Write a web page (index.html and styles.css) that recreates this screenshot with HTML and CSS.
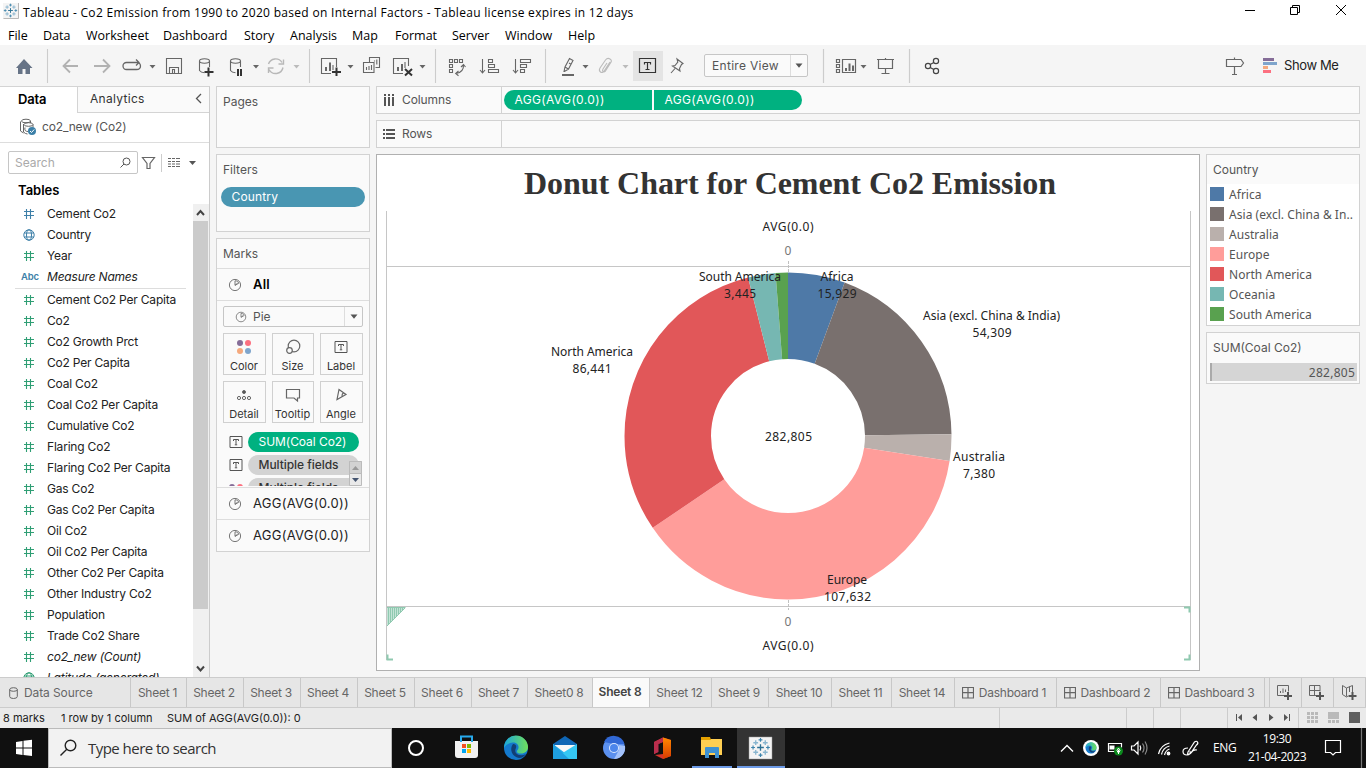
FILE: index.html
```html
<!DOCTYPE html>
<html lang="en">
<head>
<meta charset="utf-8">
<title>Tableau - Co2 Emission from 1990 to 2020</title>
<link rel="stylesheet" href="styles.css">
</head>
<body>
<svg class="defs" width="0" height="0" aria-hidden="true">
  <symbol id="hash" viewBox="0 0 12 12"><path d="M3.500 1v10M7.500 1v10M1 3.500h10M1 7.500h10" fill="none" stroke="currentColor" stroke-width="1.100"/></symbol>
  <symbol id="globe" viewBox="0 0 12 12"><g fill="none" stroke="currentColor"><circle cx="6" cy="6" r="5.200"/><ellipse cx="6" cy="6" rx="2.500" ry="5.200"/><path d="M1.200 4h9.600M1.200 8h9.600"/></g></symbol>
  <symbol id="pie" viewBox="0 0 14 14"><g fill="none" stroke="currentColor"><circle cx="7" cy="7" r="5.600"/><path d="M7 2.800v4.600l3.800-2.200M7 2.800c2 0 3.200.9 3.800 2.400M7 7.200l2.600-2"/></g></symbol>
  <symbol id="tbox" viewBox="0 0 14 14"><path d="M1 1.500h12v11H1zM4.500 6V4.500h5V6M7 4.500v5M5.800 9.800h2.400" fill="none" stroke="currentColor"/></symbol>
  <symbol id="dash" viewBox="0 0 12 12"><path d="M.500.500h11v10.500H.500zM6 .500V11M.500 5.700h11" fill="none" stroke="currentColor" stroke-width="1.200"/></symbol>
  <symbol id="down" viewBox="0 0 8 5"><path d="M.500.500h7L4 4.800z" fill="currentColor"/></symbol>
  <symbol id="tableau" viewBox="0 0 22 22"><g fill="none"><path d="M11 7.500v7M7.500 11h7" stroke="#2d7194" stroke-width="1.400"/><path d="M11 1v4M9 3h4M11 17v4M9 19h4M1.200 11h4M3.200 9v4M16.800 11h4M18.800 9v4" stroke="#3d84ac" stroke-width="1.200"/><path d="M6 3.500v5M3.500 6h5M16 3.500v5M13.500 6h5M6 13.500v5M3.500 16h5M16 13.500v5M13.500 16h5" stroke="#88b5cf" stroke-width="1.400"/></g></symbol>
</svg>

<header class="titlebar">
  <svg class="app-icon" width="16" height="16" viewBox="0 0 16 16"><path d="M0 0h16v16H0z" fill="#f4f4f4"/><path d="M.500 15.500h15V0" fill="none" stroke="#b8b8b8"/><use href="#tableau" x="0" y="0" width="15" height="15"/></svg>
  <span class="title-text">Tableau - Co2 Emission from 1990 to 2020 based on Internal Factors - Tableau license expires in 12 days</span>
  <svg class="win-buttons" width="126" height="23" viewBox="1240 0 126 23" fill="none" stroke="#000"><path d="M1245 10.500h10M1290.500 7.500h7v7h-7zM1292.500 7.500v-2h7v7h-2M1336 5l10 10M1346 5l-10 10"/></svg>
</header>
<nav class="menubar">
  <span class="w35">File</span><span class="w43">Data</span><span class="w77">Worksheet</span><span class="w81">Dashboard</span><span class="w46">Story</span><span class="w62">Analysis</span><span class="w43">Map</span><span class="w57">Format</span><span class="w53">Server</span><span class="w63">Window</span><span>Help</span>
</nav>

<div class="toolbar">
  <svg width="704" height="41" viewBox="0 45 704 41" fill="none" stroke="#666" stroke-width="1.100">
    <path d="M16 68l8-9 8.500 9h-2.500v6h-4.500v-5h-3v5H18v-6z" fill="#667386" stroke="none"/>
    <path d="M47.500 49v34M309.500 49v34M435.500 49v34M545.500 49v34" stroke="#ccc"/>
    <g stroke="#b2b2b2" stroke-width="1.800"><path d="M78 66H63.500M70 59.500L63.500 66l6.500 6.500M94 66h15M103 59.500l6.500 6.500-6.500 6.500"/></g>
    <path d="M131 62.500h-4.500a3.500 3.500 0 0 0 0 7h10q4 0 4-3.500 0-2-1.500-3M130 62.500h8.500M136 59.500l3 3-3 3" stroke-width="1.300"/>
    <path d="M166.500 58.500h15v15h-15zM169.500 73v-5.500h9V73M172.500 73v-3.500h2V73"/>
    <ellipse cx="204.500" cy="61" rx="5" ry="2.200"/><path d="M199.500 61v9.500q1.500 2 5 2.200M209.500 61v6"/>
    <path d="M208.500 67.500v9M204.500 72h9" stroke="#333" stroke-width="2"/>
    <ellipse cx="235.500" cy="61" rx="5" ry="2.200"/><path d="M230.500 61v9.500q1.500 2 5 2.200M240.500 61v6"/>
    <path d="M238 69v7M241 69v7" stroke="#333" stroke-width="2"/>
    <g stroke="#b8b8b8" stroke-width="1.400"><path d="M268.500 64a7.500 7.500 0 0 1 13.500-1.500M283 67.500a7.500 7.500 0 0 1-14 2M278.500 64h5v-4.500M273.500 68h-5v5"/></g>
    <g fill="#666" stroke="none"><path d="M149.500 65h6l-3 3.500zM253 65h6l-3 3.500zM347.500 65h6l-3 3.500zM419.500 65h6l-3 3.500zM582.500 65h6l-3 3.500z"/><path d="M293.500 65h6l-3 3.500zM622.500 65h6l-3 3.500z" fill="#bbb"/></g>
    <path d="M331 73.500h-9.500v-15h15V67M333 70v-5"/><path d="M326 71v-4M330 71v-8.500" stroke-width="2"/><path d="M336.500 67.500v8.500M332 72h9" stroke="#333" stroke-width="2"/>
    <path d="M369.500 62v-4.500h10v10h-4M363.500 62.500h10.500v10h-10.500zM366.500 70v-3M369 70v-4M371.500 70v-5M374.500 61.500v-1M376.800 64.500v-5"/>
    <path d="M403 73.500h-9.500v-15h15V66M405 68v-6"/><path d="M398 71v-4M402 71v-7" stroke-width="2"/><path d="M405 69l7 6.500M412 69l-7 6.500" stroke="#333" stroke-width="2"/>
    <path d="M449.500 59.500h3v3h-3zM454.500 59.500h3v3h-3zM459.500 59.500h3v3h-3zM449.500 64.500h3v3h-3zM449.500 69.500h3v3h-3zM463.500 65q.5 7-7.500 8.500M461 67l2.500-2.500 2 2.500M458.500 71l-2.800 2.500 2.800 2.200"/>
    <path d="M482.500 59v13.500M480 70l2.500 3 2.500-3M488.500 59.500h4v3h-4zM488.500 64.500h6v3h-6zM488.500 69.500h10v3h-10zM515.500 59v13.500M513 70l2.500 3 2.500-3M520.500 59.500h10v3h-10zM520.500 64.500h6v3h-6zM520.500 69.500h4v3h-4z"/>
    <path d="M562 75h12" stroke-width="2"/><path d="M564 71.500l1-4.500 4.500-8.500 3.500 2-4.500 8.500-4 2.500zM565 67l3.300 2M569 63l2 1.200"/>
    <path d="M610 62l-5.500 8.500q-2 3-4 1.500t-.5-4l5.500-8q2-2.500 4.500-1t.5 4l-5 8q-1.500 1.500-2.500.5t0-2.500l4-6" stroke="#bbb"/>
    <path d="M633 51h30v30h-30z" fill="#e4e4e4" stroke="none"/><path d="M639.500 58.500h16v14h-16zM644.500 64.500v-2h6v2M647.500 62.500v7M645.500 69.500h4" stroke="#333" stroke-width="1.200"/>
    <path d="M677 59l6 4.500-1.500 1-2 4 .5 2.500-7.500-5 2.500-.5 2.800-3.500zM675 68.500l-4 4.500"/>
  </svg>
  <div class="view-select"><span>Entire View</span><i><svg width="8" height="5"><use href="#down"/></svg></i></div>
  <svg class="tools-right" width="446" height="41" viewBox="808 45 446 41" fill="none" stroke="#666" stroke-width="1.200">
    <path d="M823.500 49v34M909.500 49v34" stroke="#ccc"/>
    <path d="M836.500 59.500h3v3h-3zM836.500 64.500h3v3h-3zM836.500 69.500h3v3h-3zM842.500 59.500h13v13h-13z"/><path d="M846 71v-3M849.500 71v-7.500M853 71v-5.500" stroke-width="2"/>
    <path d="M860.500 65h6l-3 3.500z" fill="#666" stroke="none"/>
    <path d="M877 59.500h17M878.500 59.500v9h14v-9M885.500 58v1M885.500 68.500v5M881.500 73.500h8"/>
    <g stroke="#444"><circle cx="928" cy="66" r="2.600"/><circle cx="936" cy="61" r="2.600"/><circle cx="936" cy="71" r="2.600"/><path d="M930.200 64.600l3.600-2.200M930.200 67.400l3.600 2.200"/></g>
    <path d="M1226.500 59.500h14.500l2.500 3.500-2.500 3.500h-14.500zM1234.500 57.500v2M1234.500 66.500v8M1232 74.500h5"/>
  </svg>
  <svg class="show-icon" width="15" height="16" viewBox="0 0 15 16"><path d="M0 0h11v3H0z" fill="#856d98"/><path d="M0 4h14v3H0z" fill="#7fa5cc"/><path d="M0 8h5v3H0z" fill="#f5a97d"/><path d="M0 12h8v3H0z" fill="#fc7080"/></svg>
  <span class="show-text">Show Me</span>
</div>

<main class="workspace">
  <aside class="data-pane">
    <div class="pane-tabs"><b>Data</b><div><span>Analytics</span><svg width="8" height="11" viewBox="0 0 8 11"><path d="M6 1L1.500 5.500 6 10" fill="none" stroke="#555" stroke-width="1.300"/></svg></div></div>
    <div class="source">
      <svg width="18" height="18" viewBox="0 0 18 18" fill="none" stroke="#666"><ellipse cx="7" cy="3" rx="4.500" ry="1.800"/><path d="M1.500 3.500v9.500l3 2M11.500 3v2M4.500 6v8q2 2 4 2"/><ellipse cx="9.500" cy="6.500" rx="4.500" ry="1.800"/><path d="M14 6.500v3M6 9.500q-1 4 3 4"/><circle cx="13" cy="13" r="4" fill="#3c80a8" stroke="none"/><path d="M11 13l1.500 1.500 2.700-3" stroke="#fff"/></svg>
      <span>co2_new (Co2)</span>
    </div>
    <div class="search-row">
      <div class="search"><span>Search</span><svg width="11" height="11" viewBox="0 0 11 11" fill="none" stroke="#555"><circle cx="6.500" cy="4.500" r="3.500"/><path d="M4 7L.500 10.500"/></svg></div>
      <svg width="64" height="20" viewBox="138 152 64 20" fill="none" stroke="#666"><path d="M142.500 156.500h12l-4.500 6v5h-3v-5z" stroke-width="1.200"/><path d="M161.500 153v18" stroke="#ccc"/><path d="M168 157.500h3M172 157.500h3M176 157.500h4M168 160.500h3M172 160.500h3M176 160.500h4M168 163h3M172 163h3M176 163h4M168 165.500h3M172 165.500h3M176 165.500h4" stroke-width="1.200"/><path d="M189 160h7l-3.500 4z" fill="#555" stroke="none"/></svg>
    </div>
    <h2>Tables</h2>
    <div class="field-area">
      <div class="fields">
        <p class="dim"><svg><use href="#hash"/></svg>Cement Co2</p>
        <p class="dim"><svg><use href="#globe"/></svg>Country</p>
        <p><svg><use href="#hash"/></svg>Year</p>
        <p class="dim"><small>Abc</small><em>Measure Names</em></p>
        <hr>
        <p><svg><use href="#hash"/></svg>Cement Co2 Per Capita</p>
        <p><svg><use href="#hash"/></svg>Co2</p>
        <p><svg><use href="#hash"/></svg>Co2 Growth Prct</p>
        <p><svg><use href="#hash"/></svg>Co2 Per Capita</p>
        <p><svg><use href="#hash"/></svg>Coal Co2</p>
        <p><svg><use href="#hash"/></svg>Coal Co2 Per Capita</p>
        <p><svg><use href="#hash"/></svg>Cumulative Co2</p>
        <p><svg><use href="#hash"/></svg>Flaring Co2</p>
        <p><svg><use href="#hash"/></svg>Flaring Co2 Per Capita</p>
        <p><svg><use href="#hash"/></svg>Gas Co2</p>
        <p><svg><use href="#hash"/></svg>Gas Co2 Per Capita</p>
        <p><svg><use href="#hash"/></svg>Oil Co2</p>
        <p><svg><use href="#hash"/></svg>Oil Co2 Per Capita</p>
        <p><svg><use href="#hash"/></svg>Other Co2 Per Capita</p>
        <p><svg><use href="#hash"/></svg>Other Industry Co2</p>
        <p><svg><use href="#hash"/></svg>Population</p>
        <p><svg><use href="#hash"/></svg>Trade Co2 Share</p>
        <p><svg><use href="#hash"/></svg><em>co2_new (Count)</em></p>
        <p><svg><use href="#globe"/></svg><em>Latitude (generated)</em></p>
      </div>
      <div class="scroll">
        <svg width="15" height="17" viewBox="0 0 15 17"><path d="M4 11l3.500-4 3.500 4" fill="none" stroke="#444" stroke-width="2"/></svg>
        <div class="thumb"></div>
        <svg width="15" height="17" viewBox="0 0 15 17"><path d="M4 6.500l3.500 4 3.500-4" fill="none" stroke="#444" stroke-width="2"/></svg>
      </div>
    </div>
  </aside>

  <section class="cards">
    <div class="card pages"><h3>Pages</h3></div>
    <div class="card filters"><h3>Filters</h3><div class="pill blue">Country</div></div>
    <div class="card marks">
      <h3>Marks</h3>
      <div class="mark-row all"><svg width="14" height="14"><use href="#pie"/></svg><b>All</b></div>
      <div class="mark-body">
        <div class="mark-type"><svg width="12" height="12"><use href="#pie"/></svg><span>Pie</span><i><svg width="8" height="5"><use href="#down"/></svg></i></div>
        <div class="mark-grid">
          <div><svg viewBox="0 0 20 20"><circle cx="6" cy="6" r="3" fill="#856d98"/><circle cx="14" cy="6" r="3" fill="#fc7080"/><circle cx="6" cy="14" r="3" fill="#f5a97d"/><circle cx="14" cy="14" r="3" fill="#7fa5cc"/></svg>Color</div>
          <div><svg viewBox="0 0 20 20" fill="none" stroke="#666" stroke-width="1.200"><circle cx="11" cy="9" r="5.800"/><circle cx="6.500" cy="13.500" r="2.800" fill="#fafafa"/></svg>Size</div>
          <div><svg viewBox="0 0 20 20" color="#555"><use href="#tbox" x="3" y="3" width="14" height="14"/></svg>Label</div>
          <div><svg viewBox="0 0 20 20" fill="none" stroke="#666"><circle cx="10" cy="7" r="1.500" fill="#555"/><circle cx="5" cy="13" r="1.600"/><circle cx="10" cy="13" r="1.600"/><circle cx="15" cy="13" r="1.600"/></svg>Detail</div>
          <div><svg viewBox="0 0 20 20" fill="none" stroke="#666" stroke-width="1.200"><path d="M3.500 4.500h13v8.500h-2v3l-3.500-3H3.500z"/></svg>Tooltip</div>
          <div><svg viewBox="0 0 20 20" fill="none" stroke="#666" stroke-width="1.200"><path d="M8 4.500l7 5-9 5zM12.500 7.500q-2 2-1.500 4"/></svg>Angle</div>
        </div>
        <div class="mark-pills">
          <div><svg width="14" height="14"><use href="#tbox"/></svg><span class="pill green">SUM(Coal Co2)</span></div>
          <div><svg width="14" height="14"><use href="#tbox"/></svg><span class="pill grey">Multiple fields</span></div>
          <div><svg width="14" height="14" viewBox="0 0 14 14"><circle cx="3" cy="6" r="3" fill="#856d98"/><circle cx="11" cy="6" r="3" fill="#fc7080"/></svg><span class="pill grey">Multiple fields</span></div>
          <svg class="mini-scroll" width="13" height="25" viewBox="0 0 13 25"><path d="M.500.500h12v12H.500zM.500 12.500h12v12H.500z" fill="#e9e9e9" stroke="#bbb"/><path d="M.500.500h12v12H.500z" fill="#d2d2d2" stroke="#bbb"/><path d="M3 9l3.500-4L10 9z" fill="#999"/><path d="M3 17l3.500 4 3.500-4z" fill="#44546f"/></svg>
        </div>
      </div>
      <div class="mark-row"><svg width="14" height="14"><use href="#pie"/></svg><span>AGG(AVG(0.0))</span></div>
      <div class="mark-row last"><svg width="14" height="14"><use href="#pie"/></svg><span>AGG(AVG(0.0))</span></div>
    </div>
  </section>

  <section class="sheet">
    <div class="shelf"><div class="shelf-name"><svg width="12" height="12" viewBox="0 0 12 12"><path d="M2 0v2M6 0v2M10 0v2M2 3v9M6 3v9M10 3v9" stroke="#555" stroke-width="2"/></svg><span>Columns</span></div><div class="pill green col first">AGG(AVG(0.0))</div><div class="pill green col second">AGG(AVG(0.0))</div></div>
    <div class="shelf"><div class="shelf-name"><svg width="12" height="12" viewBox="0 0 12 12"><path d="M0 2h2M0 6h2M0 10h2M3 2h9M3 6h9M3 10h9" stroke="#555" stroke-width="2"/></svg><span>Rows</span></div></div>
    <div class="view-row">
      <div class="view">
        <svg width="822" height="515" viewBox="377 155 822 515">
          <text class="viz-title" x="790" y="194" text-anchor="middle" textLength="532">Donut Chart for Cement Co2 Emission</text>
          <path d="M386.500 211v449M1190.500 211v449M386 266.500h805M386 606.500h805" stroke="#c6c6c6" fill="none"/>
          <path d="M788.500 261v12M788.500 600v10" stroke="#c0c0c0" stroke-dasharray="3 1"/>
          <g class="slices" transform="rotate(-90 788 436)" fill="none" stroke-width="86.500">
            <circle cx="788" cy="436" r="120.250" pathLength="282805" stroke="#4e79a7" stroke-dasharray="15929 282805"/>
            <circle cx="788" cy="436" r="120.250" pathLength="282805" stroke="#79706e" stroke-dasharray="54309 282805" stroke-dashoffset="-15929"/>
            <circle cx="788" cy="436" r="120.250" pathLength="282805" stroke="#bab0ac" stroke-dasharray="7380 282805" stroke-dashoffset="-70238"/>
            <circle cx="788" cy="436" r="120.250" pathLength="282805" stroke="#ff9d9a" stroke-dasharray="107632 282805" stroke-dashoffset="-77618"/>
            <circle cx="788" cy="436" r="120.250" pathLength="282805" stroke="#e15759" stroke-dasharray="86441 282805" stroke-dashoffset="-185250"/>
            <circle cx="788" cy="436" r="120.250" pathLength="282805" stroke="#76b7b2" stroke-dasharray="7669 282805" stroke-dashoffset="-271691"/>
            <circle cx="788" cy="436" r="120.250" pathLength="282805" stroke="#59a14f" stroke-dasharray="3445 282805" stroke-dashoffset="-279360"/>
          </g>
          <g class="viz-label" text-anchor="middle">
            <text x="788" y="231" textLength="51">AVG(0.0)</text>
            <text class="tick" x="788" y="255">0</text>
            <text x="740" y="281" textLength="82">South America</text><text x="740" y="298" textLength="32">3,445</text>
            <text x="837" y="281" textLength="33">Africa</text><text x="837" y="298" textLength="39">15,929</text>
            <text x="991.500" y="320" textLength="137">Asia (excl. China &amp; India)</text><text x="992" y="337" textLength="39">54,309</text>
            <text x="592" y="356" textLength="82">North America</text><text x="592" y="373" textLength="39">86,441</text>
            <text x="788.500" y="441" textLength="47">282,805</text>
            <text x="979" y="461" textLength="52">Australia</text><text x="979" y="478" textLength="32">7,380</text>
            <text x="847" y="584" textLength="40">Europe</text><text x="847.500" y="601" textLength="47">107,632</text>
            <text class="tick" x="788" y="626">0</text>
            <text x="788" y="650" textLength="51">AVG(0.0)</text>
          </g>
          <path d="M387 607h18.500L387 626z" fill="#c4e3d6"/>
          <path d="M388.500 607v17M390.500 607v15M392.500 607v13M394.500 607v11M396.500 607v9M398.500 607v7M400.500 607v5M402.500 607v3M405.500 607.500L387 626M387 607.500h18" stroke="#8fc9b0" fill="none"/>
          <path d="M1184 607.500h5.500v5M1184 659.500h5.500v-5M393 659.500h-5.500v-5" fill="none" stroke="#8fc9b0" stroke-width="2"/>
        </svg>
      </div>
      <div class="legends">
        <div class="card legend"><h3>Country</h3>
          <ul>
            <li><i class="c1"></i>Africa</li><li><i class="c2"></i>Asia (excl. China &amp; In..</li><li><i class="c3"></i>Australia</li><li><i class="c4"></i>Europe</li><li><i class="c5"></i>North America</li><li><i class="c6"></i>Oceania</li><li><i class="c7"></i>South America</li>
          </ul>
        </div>
        <div class="card size"><h3>SUM(Coal Co2)</h3><div class="size-bar">282,805</div></div>
      </div>
    </div>
  </section>
</main>

<div class="tabs">
  <div class="t131 ds"><svg width="9" height="12" viewBox="0 0 9 12" fill="none" stroke="#666"><ellipse cx="4.500" cy="2.500" rx="3.800" ry="1.800"/><path d="M.700 2.500v7q0 2 3.800 2t3.800-2v-7"/></svg><span>Data Source</span></div>
  <div class="t56">Sheet 1</div><div class="t57">Sheet 2</div><div class="t57">Sheet 3</div><div class="t57">Sheet 4</div><div class="t57">Sheet 5</div><div class="t57">Sheet 6</div><div class="t56">Sheet 7</div><div class="t65">Sheet0 8</div><div class="t57 active">Sheet 8</div><div class="t62">Sheet 12</div><div class="t57">Sheet 9</div><div class="t63">Sheet 10</div><div class="t60">Sheet 11</div><div class="t63">Sheet 14</div>
  <div class="t102 db"><svg width="12" height="12"><use href="#dash"/></svg>Dashboard 1</div><div class="t104 db"><svg width="12" height="12"><use href="#dash"/></svg>Dashboard 2</div><div class="t104 db"><svg width="12" height="12"><use href="#dash"/></svg>Dashboard 3</div>
  <div class="t5"></div>
  <div class="t32"><svg width="16" height="16" viewBox="0 0 16 16" fill="none" stroke="#666"><path d="M7 10.500H.500V.500h11v6M3.500 8V6M6 8V3.500M8.500 7V4.500"/><path d="M11 7v8M7 11h8" stroke="#555" stroke-width="2"/></svg></div>
  <div class="t32"><svg width="16" height="16" viewBox="0 0 16 16" fill="none" stroke="#666"><path d="M7 10.500H.500V.500h10.500v6M5.500.500v10M.500 5.500h10.500"/><path d="M11 7v8M7 11h8" stroke="#555" stroke-width="2"/></svg></div>
  <div class="t32"><svg width="16" height="16" viewBox="0 0 16 16" fill="none" stroke="#666"><path d="M7 11L5.500 12 1.500 9.500V.500L5.500 3 11.500.500V7M5.500 3v8.500M8.500 1.500V7"/><path d="M11.500 7v8M7.500 11h8" stroke="#555" stroke-width="2"/></svg></div>
</div>

<div class="status">
  <span class="s1">8 marks</span><span class="s2">1 row by 1 column</span><span class="s3">SUM of AGG(AVG(0.0)): 0</span>
  <svg width="367" height="20" viewBox="999 708 367 20"><path d="M999.500 708v20M1126.500 708v20M1153.500 708v20M1180.500 708v20M1227.500 708v20M1298.500 708v20" stroke="#ccc"/>
    <g fill="#555"><path d="M1236 714h1v7h-1zM1242 714v7l-4-3.500zM1257 714v7l-4.500-3.500zM1269 714v7l4.500-3.500zM1284 714v7l4-3.500zM1289 714h1v7h-1z"/></g>
    <g fill="#b9b9b9"><path d="M1307 712h3v3h-3zM1311 712h3v3h-3zM1315 712h3v3h-3zM1307 716h3v3h-3zM1311 716h3v3h-3zM1315 716h3v3h-3zM1307 720h3v3h-3zM1311 720h3v3h-3zM1315 720h3v3h-3zM1328 712h11v7h-11zM1328 720h3v3h-3zM1332 720h3v3h-3zM1336 720h3v3h-3z"/></g><path d="M1349 712h11v11h-11z" fill="#5f5f5f"/></svg>
</div>

<footer class="taskbar">
  <svg width="48" height="40" viewBox="0 728 48 40" fill="#fff"><path d="M16 742l6.500-1v6.500H16zM23.500 740.800l8.500-1v7.700h-8.500zM16 748.500h6.500v6.500l-6.500-1zM23.500 748.500H32v7.500l-8.500-1z"/></svg>
  <div class="win-search"><svg width="17" height="18" viewBox="0 0 17 18" fill="none" stroke="#222" stroke-width="1.400"><circle cx="10.500" cy="6.500" r="5.300"/><path d="M6.800 10.200L.500 16.500"/></svg><span>Type here to search</span></div>
  <svg width="393" height="40" viewBox="392 728 393 40">
    <defs><linearGradient id="eg" x1="0" y1="0" x2="1" y2="0"><stop offset="0" stop-color="#1aa6dc"/><stop offset="1" stop-color="#70e05a"/></linearGradient><linearGradient id="of" x1="0" y1="0" x2="0" y2="1"><stop offset="0" stop-color="#ff8a00"/><stop offset="1" stop-color="#d83b01"/></linearGradient></defs>
    <circle cx="416" cy="748" r="7" fill="none" stroke="#fff" stroke-width="2"/>
    <path d="M455 741h23v14q0 3-3 3h-17q-3 0-3-3z" fill="#f1f1f1"/><path d="M461 742v-5.500h11v5.500" fill="none" stroke="#27a9ec" stroke-width="2"/><path d="M462 744h4v4h-4z" fill="#f25022"/><path d="M467 744h4v4h-4z" fill="#7fba00"/><path d="M462 749h4v4h-4z" fill="#00a4ef"/><path d="M467 749h4v4h-4z" fill="#ffb900"/>
    <g id="edge"><circle cx="516" cy="748" r="12" fill="#1479cc"/><path d="M504 748a12 12 0 0 1 24-1c0 4-3 6.500-7 6.500s-5-2-3.500-3.500c3-4-1-8-5-7.500-4 .3-7 3-8.500 5.500z" fill="url(#eg)"/><path d="M513 744c-4 5-1 13 6 14 3 0 5-1.500 7-4-6 3-13 0-10-6 1-3-1-4-3-4z" fill="#123f75"/></g>
    <path d="M553 744l12-8 12 8v15h-24z" fill="#0f66b5"/><path d="M555 745h20v9h-20z" fill="#f7f7f7"/><path d="M553 744l12 9-12 6z" fill="#28aee8"/><path d="M577 744v15h-24z" fill="#35c7f3"/><path d="M553 744l16 15h-16z" fill="#1f9fe0"/>
    <circle cx="614" cy="748" r="11" fill="#5b90ef"/><path d="M604 742a11 11 0 0 1 20.500 2H614z" fill="#3168d5"/><path d="M625 746a11 11 0 0 1-11 13l5-9v-5z" fill="#a3c2fb"/><circle cx="614" cy="748" r="5" fill="#dce9ff"/><circle cx="614" cy="748" r="4" fill="#4c86ec"/>
    <path d="M654 742l9-4.500 8 2.500v16l-8 3-8-4 8-1V742l-5 2v8l-4 2z" fill="#d6352b"/><path d="M663 737.500l8 2.500v16l-8 3z" fill="url(#of)"/><path d="M654 742l9-4.500v4.500l-4.500 2v8l-4.500 2z" fill="#b92e4d"/>
    <path d="M701 739h21v16h-21z" fill="#ffcf52"/><path d="M701 737h9l1 3h-10z" fill="#e5a100"/><path d="M705 748q0-1 1-1h12q1 0 1 1v10h-4v-5h-6v5h-4z" fill="#3f92d2"/><path d="M692 766h40v2h-40z" fill="#6c9ae6"/>
    <path d="M737 728h48v40h-48z" fill="#333"/><path d="M737 766h48v2h-48z" fill="#6c9ae6"/><path d="M749 737h23v22h-23z" fill="#f4f4f4" stroke="#999" stroke-width=".5"/><use href="#tableau" x="750" y="737" width="21" height="21"/>
  </svg>
  <svg class="tray" width="146" height="40" viewBox="1056 728 146 40" fill="none" stroke="#fff" stroke-width="1.200">
    <path d="M1061 751.500l6-6 6 6" stroke-width="1.400"/>
    <circle cx="1091" cy="748" r="8" fill="#fff" stroke="none"/><use href="#edge" transform="translate(1091 748) scale(.46) translate(-516 -748)" stroke="none"/>
    <path d="M1116 751.500h-7.500v-8h13v4"/><path d="M1109.500 745.500h5v4h-5z" fill="#fff" stroke="none"/><circle cx="1118.500" cy="751" r="4.500" fill="#0b8a1d" stroke="none"/><path d="M1118.500 754v-4M1118.500 748q-3 3 0 5 3-2 0-5" stroke-width="1"/>
    <path d="M1131.500 746v4h2.500l4 4v-12l-4 4zM1140 745.500q1.500 2.500 0 5"/><path d="M1142.500 743.500q3 4.500 0 9M1145 741.500q4 6.500 0 13" stroke="#888"/>
    <path d="M1158.500 754q2-9 11-11M1161.500 754.500q1.500-7 8-8.500M1164.500 755q1-4.500 5-6"/><circle cx="1168.500" cy="753.500" r="1.300" fill="#fff"/>
    <path d="M1188 752l6.500-10q2-1.500 3 0t-1 3l-6 8.500-3 1zM1188 748q-5 0-5 3.500t4 3.500 3-4M1191 753q2-4 6-3"/>
  </svg>
  <span class="lang">ENG</span>
  <div class="clock"><span>19:30</span><span>21-04-2023</span></div>
  <svg class="note" width="42" height="40" viewBox="1324 728 42 40" fill="none" stroke="#fff" stroke-width="1.200"><path d="M1325.500 740.500h15v12h-5l-2.500 2.500-2.500-2.500h-5z"/><path d="M1361.500 728v40" stroke="#777"/></svg>
</footer>
</body>
</html>
```
FILE: styles.css
```css
* { box-sizing: border-box; margin: 0; padding: 0; }
body { width: 1366px; height: 768px; overflow: hidden; background: #f5f5f5; font-family: Inter, "Noto Sans", sans-serif; font-size: 12px; color: #333; }
svg { display: block; flex: none; }
.defs { position: absolute; }
span, p, b { white-space: nowrap; }
i { font-style: normal; }

.titlebar { height: 24px; background: #fff; display: flex; padding-left: 3px; color: #000; font-family: "Open Sans", sans-serif; }
.app-icon { margin-top: 3px; }
.title-text { margin-left: 4px; line-height: 26px; font-size: 12px; letter-spacing: 0.3px; }
.win-buttons { margin-left: auto; }
.menubar { height: 21px; background: #fff; display: flex; padding-left: 8px; color: #000; font-family: "Open Sans", sans-serif; font-size: 12.5px; line-height: 24px; }
.w35 { width: 35px; } .w43 { width: 43px; } .w77 { width: 77px; } .w81 { width: 81px; } .w46 { width: 46px; } .w62 { width: 62px; } .w57 { width: 57px; } .w53 { width: 53px; } .w63 { width: 63px; }

.toolbar { height: 41px; display: flex; align-items: flex-start; }
.view-select { margin-top: 9px; width: 104px; height: 23px; border: 1px solid #c6c6c6; border-radius: 2px; background: #fafafa; display: flex; line-height: 21px; font-size: 12px; color: #555; }
.view-select span { width: 85px; padding-left: 7px; letter-spacing: 0.3px; }
.view-select i { border-left: 1px solid #ddd; flex: 1; display: flex; align-items: center; justify-content: center; color: #555; }
.show-icon { margin: 13px 0 0 9px; }
.show-text { margin: 12px 0 0 6px; font-size: 13px; line-height: 16px; color: #222; letter-spacing: -0.4px; }

.workspace { height: 591px; display: flex; }
.data-pane { width: 210px; background: #fff; border-top: 1px solid #d4d4d4; border-right: 1px solid #ccc; overflow: hidden; display: flex; flex-direction: column; }
.pane-tabs { height: 26px; display: flex; line-height: 25px; color: #333; }
.pane-tabs b { width: 77px; padding-left: 18px; font-size: 13px; letter-spacing: -0.2px; font-weight: 600; color: #000; }
.pane-tabs div { flex: 1; border-left: 1px solid #d4d4d4; border-bottom: 1px solid #d4d4d4; background: #fafafa; padding: 0 6px 2px 12px; display: flex; align-items: center; justify-content: space-between; }
.pane-tabs span { font-size: 12px; letter-spacing: 0.3px; }
.source { height: 30px; border-bottom: 1px solid #ddd; padding: 0 0 2px 19px; display: flex; align-items: center; gap: 5px; color: #555; font-size: 12px; letter-spacing: -0.15px; }
.search-row { display: flex; padding: 8px 0 0 8px; align-items: center; }
.search { width: 130px; height: 23px; border: 1px solid #c6c6c6; border-radius: 2px; display: flex; align-items: center; justify-content: space-between; padding: 0 6px; color: #aaa; font-size: 12px; }
h2 { font-size: 13px; font-weight: 600; color: #000; padding-left: 18px; line-height: 16px; margin-top: 8px; height: 23px; }
.field-area { flex: 1; min-height: 0; display: flex; margin-top: -1px; }
.fields { width: 193px; overflow: hidden; }
.fields p { height: 21px; line-height: 20px; padding-left: 23px; display: flex; align-items: center; color: #222; font-size: 12px; letter-spacing: -0.2px; position: relative; top: -1px; }
.fields svg { width: 12px; height: 12px; margin-right: 12px; color: #2f9e74; }
.fields .dim svg { color: #3d7fa8; }
.fields small { width: 24px; margin-left: -2px; margin-right: 2px; font-size: 9.500px; font-weight: 600; color: #3d7fa8; }
.fields hr { border: 0; border-top: 1px solid #ddd; margin: 0 7px 1px 15px; }
.scroll { width: 16px; background: #f0f0f0; display: flex; flex-direction: column; justify-content: space-between; }
.thumb { background: #cbcbcb; height: 388px; width: 15px; margin-bottom: auto; }

.cards { width: 166px; padding: 0 0 0 6px; display: flex; flex-direction: column; gap: 6px; }
.card { background: #fafafa; border: 1px solid #d2d2d2; }
.cards .card { width: 154px; }
h3 { font-size: 12px; font-weight: 400; line-height: 30px; padding-left: 6px; color: #555; }
.pages { height: 62px; }
.filters { height: 78px; }
.pill { height: 20px; line-height: 20px; border-radius: 10px; color: #fff; font-size: 12px; padding-left: 10.500px; }
.blue { background: #4996b2; margin: 2px 4px 0; letter-spacing: 0.15px; }
.green { background: #00b180; }
.grey { background: #d3d3d3; color: #333; }
.marks { height: 314px; }
.marks h3 { height: 30px; border-bottom: 1px solid #ddd; }
.mark-row { height: 32px; border-bottom: 1px solid #ddd; display: flex; align-items: center; padding-left: 11px; gap: 11px; font-size: 13px; color: #222; letter-spacing: 0.25px; }
.mark-row svg { color: #777; }
.mark-row span, .mark-row b { padding-bottom: 2px; }
.mark-row.last { border: 0; }
.mark-row b { color: #000; font-weight: 600; }
.mark-body { height: 187px; padding: 5px 6px 0; border-bottom: 1px solid #ddd; overflow: hidden; }
.mark-type { height: 21px; border: 1px solid #c6c6c6; border-radius: 2px; display: flex; align-items: center; padding-left: 11px; color: #777; }
.mark-type span { margin-left: 6px; flex: 1; color: #555; }
.mark-type i { height: 19px; width: 18px; border-left: 1px solid #ddd; display: grid; place-items: center; color: #555; }
.mark-grid { margin-top: 6px; display: grid; grid-template-columns: 43px 42px 43px; gap: 6px; }
.mark-grid div { height: 42px; border: 1px solid #d0d0d0; padding-right: 1px; display: flex; flex-direction: column; align-items: center; font-size: 11px; line-height: 18px; color: #333; }
.mark-grid svg { width: 20px; height: 20px; margin-top: 3px; }
.mark-pills { position: relative; padding: 9px 0 0 6px; height: 63px; overflow: hidden; }
.mark-pills div { display: flex; align-items: flex-start; gap: 5px; height: 23px; color: #555; }
.mark-pills div > svg { margin-top: 3px; }
.mark-pills .pill { width: 111px; letter-spacing: -0.05px; }
.mark-pills .grey { font-weight: 500; }
.mini-scroll { position: absolute; left: 126px; top: 38px; }

.sheet { width: 984px; display: flex; flex-direction: column; gap: 6px; }
.shelf { height: 28px; border: 1px solid #d2d2d2; background: #fafafa; display: flex; align-items: center; }
.shelf-name { width: 125px; height: 26px; border-right: 1px solid #d2d2d2; display: flex; align-items: center; gap: 7px; padding-left: 6px; color: #555; font-size: 12px; }
.shelf-name span { padding-bottom: 1px; letter-spacing: -0.1px; }
.col { width: 148px; margin-left: 2px; letter-spacing: 0.35px; }
.first { border-radius: 10px 0 0 10px; }
.second { border-radius: 0 10px 10px 0; }
.view-row { display: flex; gap: 6px; align-items: flex-start; }
.view { width: 824px; height: 517px; border: 1px solid #b0b0b0; background: #fff; }
.viz-title { font: bold 32px "Liberation Serif", serif; fill: #333; }
.viz-label { font-family: "Noto Sans", sans-serif; font-size: 12px; fill: #222; }
.viz-label .tick { fill: #777; }
.legends { width: 154px; display: flex; flex-direction: column; gap: 6px; }
.legend { height: 172px; }
.legend h3 { height: 29px; }
.legend ul { list-style: none; background: #fff; height: 141px; padding: 0 3px; }
.legend li { height: 20px; display: flex; align-items: center; gap: 5px; font-family: "Noto Sans", sans-serif; font-size: 12px; color: #555; white-space: nowrap; letter-spacing: 0.04px; }
.legend i { width: 14px; height: 14px; flex: none; }
.c1 { background: #4e79a7; } .c2 { background: #79706e; } .c3 { background: #bab0ac; } .c4 { background: #ff9d9a; } .c5 { background: #e15759; } .c6 { background: #76b7b2; } .c7 { background: #59a14f; }
.size { height: 52px; padding-bottom: 2px; }
.size-bar { height: 18px; margin: 0 2px 0 3px; border-left: 2px solid #aaa; background: #d5d5d5; text-align: right; padding-right: 2px; line-height: 19px; font-family: "Noto Sans", sans-serif; font-size: 12px; letter-spacing: 0.25px; color: #555; }

.tabs { height: 31px; background: #e6e6e6; border-top: 1px solid #ccc; border-bottom: 1px solid #ccc; display: flex; }
.tabs > div { border-right: 1px solid #c8c8c8; padding-right: 2px; display: flex; align-items: center; justify-content: center; white-space: nowrap; font-size: 12px; color: #666; letter-spacing: -0.25px; }
.tabs .active { background: #fafafa; font-weight: 600; color: #444; letter-spacing: -0.2px; padding-bottom: 2px; }
.t131 { width: 131px; } .t56 { width: 56px; } .t57 { width: 57px; } .t65 { width: 65px; } .t62 { width: 62px; } .t63 { width: 63px; } .t60 { width: 60px; } .t102 { width: 102px; } .t104 { width: 104px; } .t5 { width: 5px; } .t32 { width: 32px; }
.tabs .t5 { padding: 0; }
.tabs .ds { justify-content: flex-start; padding-left: 9px; gap: 6px; letter-spacing: -0.1px; }
.tabs .db { gap: 5px; padding-right: 3px; }
.status { height: 20px; background: #eaeaea; display: flex; font-size: 11px; line-height: 20px; color: #222; padding-left: 3px; }
.s1 { width: 58px; } .s2 { width: 106px; } .s3 { flex: 1; }

.taskbar { height: 40px; background: #101010; display: flex; color: #fff; font-family: "Open Sans", sans-serif; }
.win-search { width: 344px; height: 40px; border: 1px solid #bbb; background: #f2f2f2; display: flex; align-items: center; padding-left: 11px; gap: 11px; font-size: 15px; letter-spacing: -0.53px; color: #333; }
.tray { margin-left: 271px; }
.lang { width: 38px; padding-left: 11px; line-height: 39px; font-size: 12px; letter-spacing: -0.4px; }
.clock { width: 74px; margin-right: 10px; display: flex; flex-direction: column; align-items: center; font-size: 12px; line-height: 18px; padding-top: 2px; letter-spacing: -0.45px; }
.note { margin-left: auto; }
```
